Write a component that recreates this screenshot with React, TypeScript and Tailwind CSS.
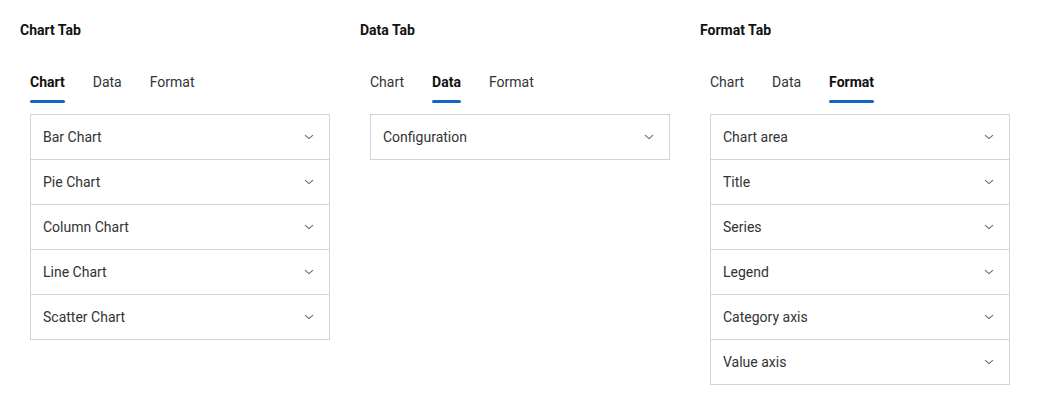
import { useState } from "react";

const tabs = ["Chart", "Data", "Format"] as const;
type Tab = (typeof tabs)[number];

const sections: Record<Tab, string[]> = {
  Chart: ["Bar Chart", "Pie Chart", "Column Chart", "Line Chart", "Scatter Chart"],
  Data: ["Configuration"],
  Format: ["Chart area", "Title", "Series", "Legend", "Category axis", "Value axis"],
};

function Chevron() {
  return (
    <svg width="16" height="16" viewBox="0 0 24 24" fill="none" stroke="#6b6b6b" strokeWidth="1.6" strokeLinecap="round" strokeLinejoin="round">
      <path d="m6.5 9.5 5.5 5 5.5-5" />
    </svg>
  );
}

function TabPanel({ title, initial }: { title: string; initial: Tab }) {
  const [active, setActive] = useState<Tab>(initial);

  return (
    <div className="w-[340px]">
      <h2 className="text-[14px] leading-5 font-bold text-[#111]">{title}</h2>

      {/* tab strip */}
      <div className="mt-8 pl-[10px] flex gap-[28px]">
        {tabs.map((t) => (
          <button
            key={t}
            onClick={() => setActive(t)}
            className={`flex flex-col items-stretch text-[14px] leading-5 ${
              active === t ? "font-bold text-[#111]" : "text-[#333]"
            }`}
          >
            <span>{t}</span>
            <span
              className={`mt-2 h-[3px] rounded-full ${active === t ? "bg-[#1565c0]" : "bg-transparent"}`}
            />
          </button>
        ))}
      </div>

      {/* accordion */}
      <div className="mt-[11px] ml-[10px] w-[300px] border border-[#d4d4d4]">
        {sections[active].map((s, i) => (
          <div
            key={s}
            className={`h-[44px] flex items-center justify-between px-3 text-[14px] text-[#333] ${
              i > 0 ? "border-t border-[#d4d4d4] h-[45px]" : ""
            }`}
          >
            <span>{s}</span>
            <Chevron />
          </div>
        ))}
      </div>
    </div>
  );
}

export default function App() {
  return (
    <div className="min-h-screen bg-white font-['Roboto',sans-serif] pt-5 pl-5 flex">
      <TabPanel title="Chart Tab" initial="Chart" />
      <TabPanel title="Data Tab" initial="Data" />
      <TabPanel title="Format Tab" initial="Format" />
    </div>
  );
}
